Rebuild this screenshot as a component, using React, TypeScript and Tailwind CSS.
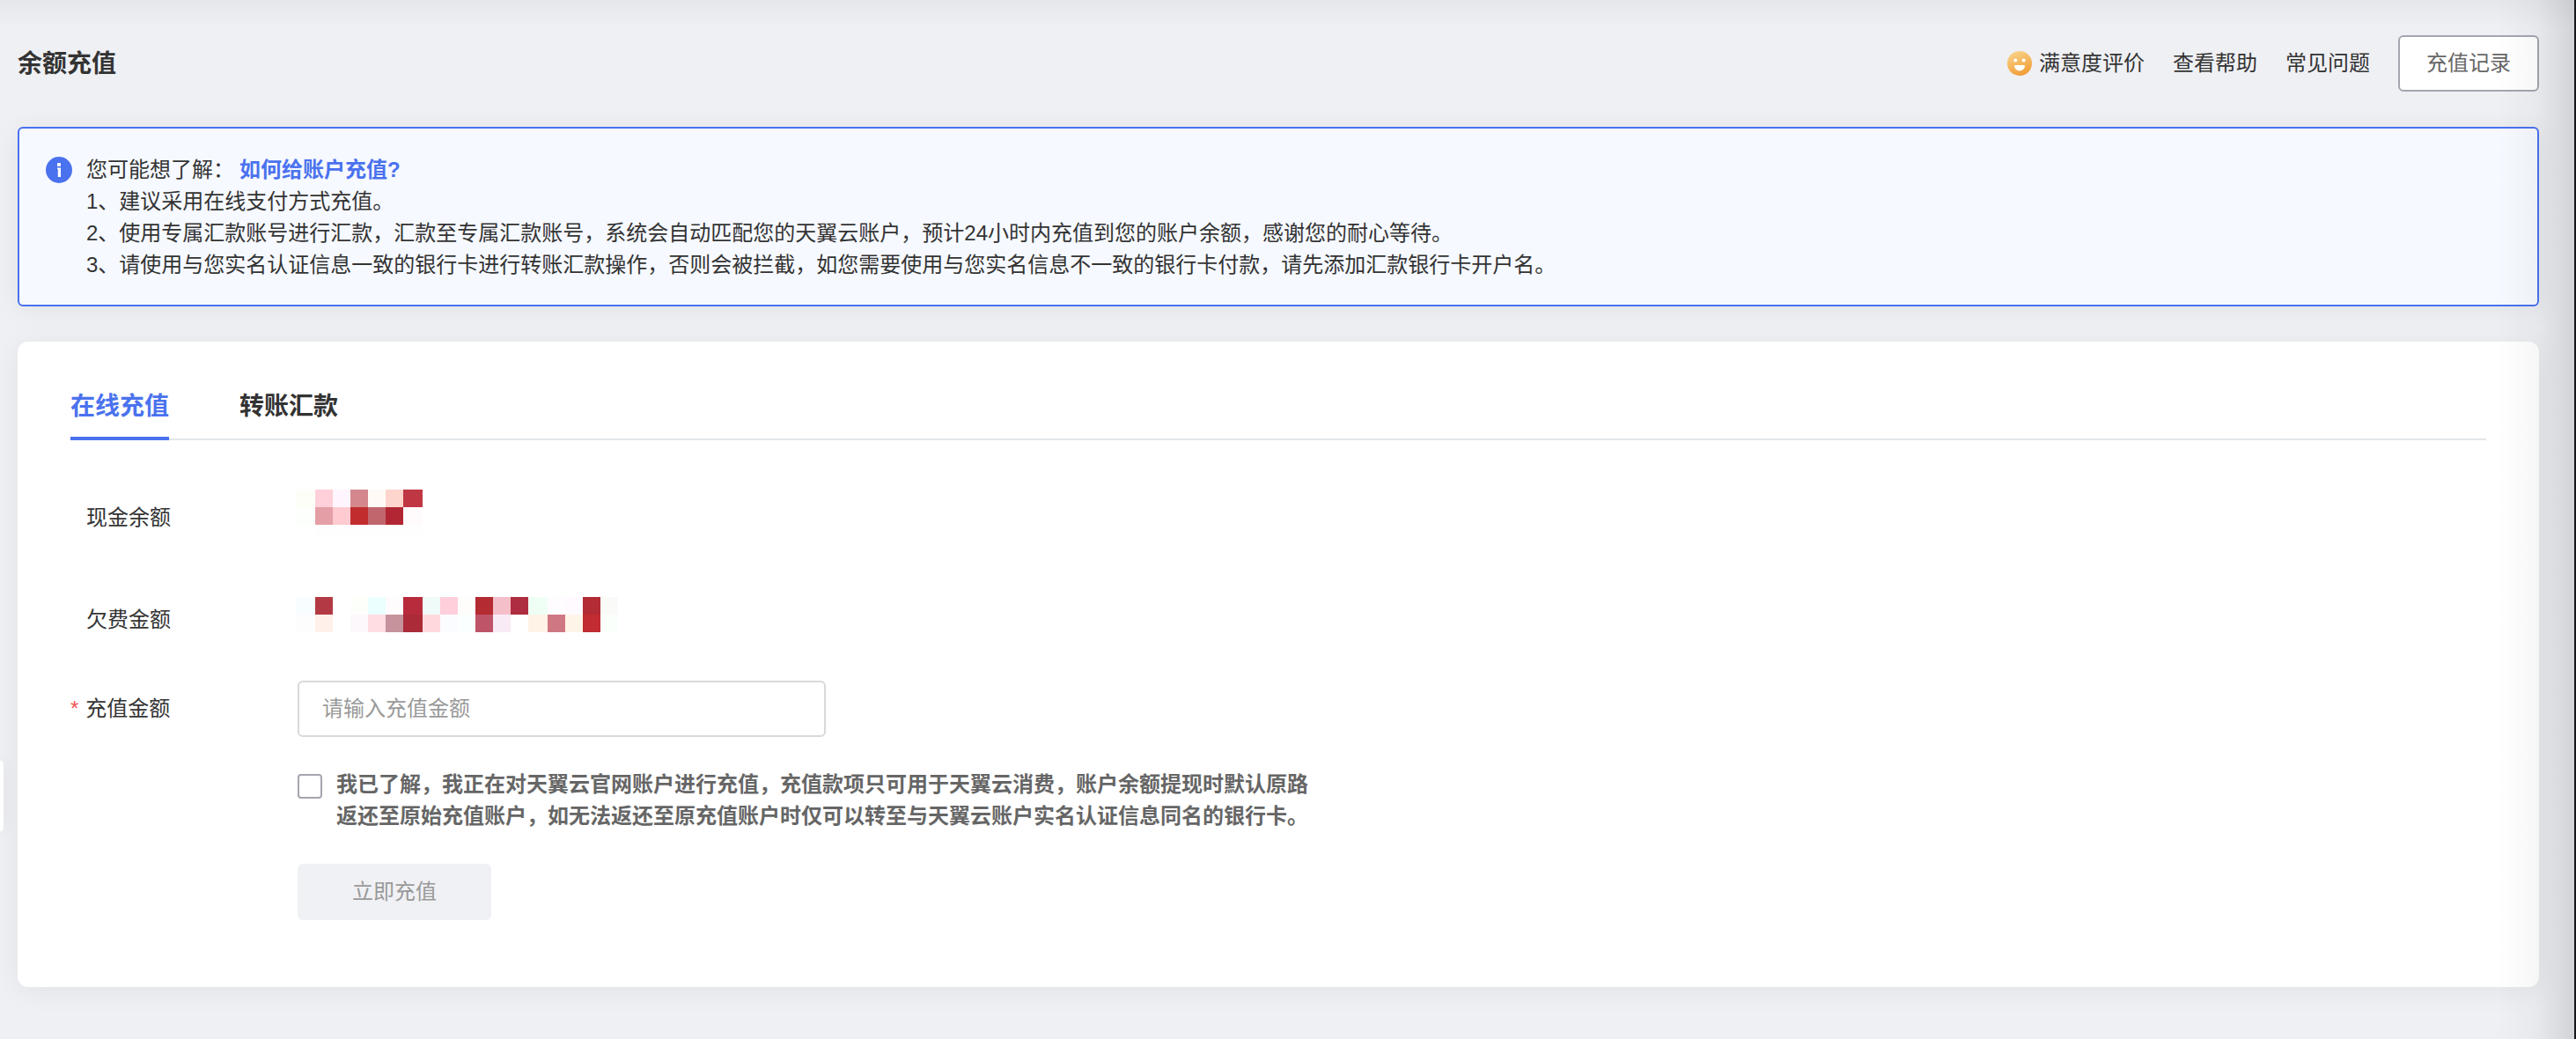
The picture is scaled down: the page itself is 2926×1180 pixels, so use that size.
import { useState, type ReactNode } from 'react'

type Cell = [x: number, y: number, w: number, h: number, fill: string]

// masked amounts, one colour block per cell
const CASH_MASK: Cell[] = [
  [0, 0, 22, 20, '#fdfef8'],
  [22, 0, 20, 20, '#ffd0d9'],
  [42, 0, 20, 20, '#fff5ff'],
  [62, 0, 20, 20, '#d4888d'],
  [82, 0, 20, 20, '#fffaf5'],
  [102, 0, 20, 20, '#fdd5cd'],
  [122, 0, 22, 20, '#c03744'],
  [0, 20, 22, 20, '#fdfffc'],
  [22, 20, 20, 20, '#e49fa6'],
  [42, 20, 20, 20, '#ffcad0'],
  [62, 20, 20, 20, '#c12d2e'],
  [82, 20, 20, 20, '#c2666e'],
  [102, 20, 20, 20, '#b22633'],
  [122, 20, 22, 20, '#fffbfd'],
  [22, 40, 122, 14, '#fefefe'],
]

const DEBT_MASK: Cell[] = [
  [22, 0, 20, 6, '#fffffb'],
  [164, 0, 20, 6, '#fbffff'],
  [0, 6, 22, 20, '#f8fdff'],
  [22, 6, 20, 20, '#b33a44'],
  [62, 6, 20, 20, '#fcfffa'],
  [82, 6, 20, 20, '#ebfffe'],
  [102, 6, 20, 20, '#fefcfd'],
  [122, 6, 22, 20, '#b82b3c'],
  [144, 6, 20, 20, '#f0faf8'],
  [164, 6, 20, 20, '#ffcfdb'],
  [184, 6, 20, 20, '#fffdfc'],
  [204, 6, 20, 20, '#b42b32'],
  [224, 6, 20, 20, '#f4bfc9'],
  [244, 6, 20, 20, '#ae2d40'],
  [264, 6, 22, 20, '#effff6'],
  [286, 6, 20, 20, '#fefcff'],
  [306, 6, 20, 20, '#fefaff'],
  [326, 6, 20, 20, '#b32b34'],
  [346, 6, 20, 20, '#fafbf9'],
  [0, 26, 22, 20, '#fdfdfe'],
  [22, 26, 20, 20, '#fff0e9'],
  [62, 26, 20, 20, '#fdf8fb'],
  [82, 26, 20, 20, '#ffdde2'],
  [102, 26, 20, 20, '#c6929c'],
  [122, 26, 22, 20, '#ab2b38'],
  [144, 26, 20, 20, '#ffd8dd'],
  [164, 26, 20, 20, '#fbfcff'],
  [184, 26, 20, 20, '#faffff'],
  [204, 26, 20, 20, '#bd5468'],
  [224, 26, 20, 20, '#f9ebf6'],
  [264, 26, 22, 20, '#fff3e8'],
  [286, 26, 20, 20, '#cf7883'],
  [306, 26, 20, 20, '#fff4e8'],
  [326, 26, 20, 20, '#c12b31'],
  [346, 26, 20, 20, '#fafffc'],
]

const TABS = [
  { key: 'online', label: '在线充值' },
  { key: 'transfer', label: '转账汇款' },
]

function Mask({ cells, width, height, label }: { cells: Cell[]; width: number; height: number; label: string }) {
  return (
    <svg width={width} height={height} viewBox={`0 0 ${width} ${height}`} role="img" aria-label={label} shapeRendering="crispEdges">
      {cells.map(([x, y, w, h, fill]) => (
        <rect key={`${x}-${y}`} x={x} y={y} width={w} height={h} fill={fill} />
      ))}
    </svg>
  )
}

function SmileIcon() {
  return (
    <svg className="size-7" viewBox="0 0 28 28" aria-hidden="true">
      <defs>
        <linearGradient id="smile" x1="0.3" y1="0" x2="0.7" y2="1">
          <stop offset="0" stopColor="#f8d287" />
          <stop offset="1" stopColor="#f19a33" />
        </linearGradient>
      </defs>
      <circle cx="14" cy="14" r="14" fill="url(#smile)" />
      <circle cx="9.3" cy="10.6" r="2" fill="#fff" />
      <circle cx="18.7" cy="10.6" r="2" fill="#fff" />
      <path d="M8.8 16h10.4c.5 0 .8.3.8.8a6 5.6 0 0 1-12 0c0-.5.3-.8.8-.8z" fill="#fff" />
    </svg>
  )
}

function InfoIcon() {
  return (
    <svg className="size-[30px] shrink-0" viewBox="0 0 30 30" aria-hidden="true">
      <circle cx="15" cy="15" r="15" fill="#4a72ee" />
      <rect x="13" y="7.2" width="4" height="3.6" fill="#fff" />
      <path d="M13 12.6h4V23h-3.2v-9H13z" fill="#fff" />
    </svg>
  )
}

function AmountRow({ label, children }: { label: string; children: ReactNode }) {
  return (
    <div className="flex h-16">
      <div className="flex w-[256px] items-center pl-[18px]">{label}</div>
      {children}
    </div>
  )
}

export default function App() {
  const [tab, setTab] = useState('online')
  const [amount, setAmount] = useState('')
  const [agreed, setAgreed] = useState(false)

  return (
    <div className="relative min-h-screen overflow-hidden bg-[#eff0f4] pt-10 pr-[42px] pb-[59px] pl-5 font-['Liberation_Sans','Noto_Sans_CJK_SC',sans-serif] text-2xl leading-9 text-[#333]">
      <header className="flex h-16 items-center justify-between">
        <h1 className="pt-0.5 text-[28px] leading-10 font-semibold">余额充值</h1>
        <nav className="flex items-center gap-8">
          <a href="#rate" className="flex items-center gap-2">
            <SmileIcon />
            满意度评价
          </a>
          <a href="#help">查看帮助</a>
          <a href="#faq">常见问题</a>
          <button type="button" className="h-16 rounded-md border-2 border-[#a4a5b0] bg-white px-[30px] text-[#666]">
            充值记录
          </button>
        </nav>
      </header>

      <section className="mt-10 flex gap-4 rounded-md border-2 border-[#4a72ee] bg-[#f6f9ff] px-[30px] pt-[29px] pb-[27px] shadow-[0_4px_32px_rgba(0,0,0,0.06)]">
        <div className="flex h-9 items-center">
          <InfoIcon />
        </div>
        <div>
          <p>
            您可能想了解：
            <a href="#how" className="ml-1.5 font-semibold text-[#4a72ee]">
              如何给账户充值?
            </a>
          </p>
          <p>1、建议采用在线支付方式充值。</p>
          <p>2、使用专属汇款账号进行汇款，汇款至专属汇款账号，系统会自动匹配您的天翼云账户，预计24小时内充值到您的账户余额，感谢您的耐心等待。</p>
          <p>3、请使用与您实名认证信息一致的银行卡进行转账汇款操作，否则会被拦截，如您需要使用与您实名信息不一致的银行卡付款，请先添加汇款银行卡开户名。</p>
        </div>
      </section>

      <main className="mt-10 rounded-xl bg-white px-[60px] pt-[54px] pb-[76px] shadow-[0_4px_32px_rgba(0,0,0,0.06)]">
        <div role="tablist" className="flex gap-20 shadow-[inset_0_-2px_0_#e1e6ea]">
          {TABS.map((t) => (
            <button
              key={t.key}
              type="button"
              role="tab"
              aria-selected={tab === t.key}
              onClick={() => setTab(t.key)}
              className={`border-b-4 pb-3.5 text-[28px] leading-10 font-semibold ${
                tab === t.key ? 'border-[#4a72ee] text-[#4a72ee]' : 'border-transparent'
              }`}
            >
              {t.label}
            </button>
          ))}
        </div>

        <form className="pt-14" onSubmit={(e) => e.preventDefault()}>
          <AmountRow label="现金余额">
            <Mask cells={CASH_MASK} width={144} height={54} label="现金余额" />
          </AmountRow>
          <div className="mt-[52px]">
            <AmountRow label="欠费金额">
              <Mask cells={DEBT_MASK} width={366} height={46} label="欠费金额" />
            </AmountRow>
          </div>

          <div className="mt-[37px] flex items-center">
            <label htmlFor="amount" className="flex w-[258px] gap-2">
              <span className="text-[#f25555]">*</span>
              充值金额
            </label>
            <input
              id="amount"
              type="text"
              value={amount}
              onChange={(e) => setAmount(e.target.value)}
              placeholder="请输入充值金额"
              className="h-16 w-[600px] rounded-md border-2 border-[#d9d9d9] bg-white px-[26px] placeholder:text-[#999]"
            />
          </div>

          <div className="mt-9 ml-[258px] flex items-start gap-4">
            <input
              id="agree"
              type="checkbox"
              checked={agreed}
              onChange={(e) => setAgreed(e.target.checked)}
              className="mt-1.5 size-7 shrink-0 appearance-none rounded border-2 border-[#a4a5b0] bg-white checked:bg-[#4a72ee]"
            />
            <label htmlFor="agree" className="max-w-[1112px] font-semibold text-[#666]">
              我已了解，我正在对天翼云官网账户进行充值，充值款项只可用于天翼云消费，账户余额提现时默认原路返还至原始充值账户，如无法返还至原充值账户时仅可以转至与天翼云账户实名认证信息同名的银行卡。
            </label>
          </div>

          <button
            type="submit"
            disabled={!agreed || !amount}
            className="mt-9 ml-[258px] h-16 w-[220px] rounded-md bg-[#4a72ee] text-white disabled:bg-[#f0f1f5] disabled:text-[#999]"
          >
            立即充值
          </button>
        </form>
      </main>

      {/* shade under the top bar */}
      <div className="pointer-events-none absolute inset-x-0 top-0 h-8 bg-linear-to-b from-black/4 to-transparent" />
      {/* collapsed side menu handle */}
      <button
        type="button"
        aria-label="展开菜单"
        className="absolute top-[864px] left-0 h-20 w-1 rounded-r-full bg-white shadow-[0_0_16px_rgba(0,0,0,0.12)]"
      />
      {/* drawer edge on the right */}
      <div className="pointer-events-none absolute inset-y-0 right-0 w-[90px] border-r-2 border-[#16161c] bg-linear-to-r from-transparent via-black/3 to-black/12" />
    </div>
  )
}
